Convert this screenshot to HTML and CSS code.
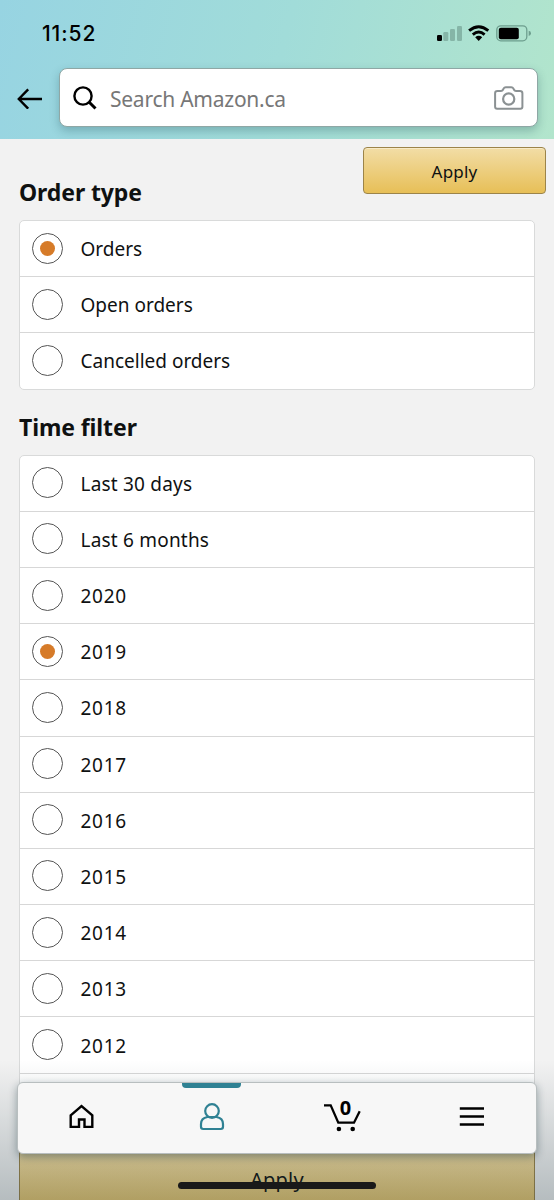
FILE: index.html
```
<!DOCTYPE html>
<html lang="en">
<head>
<meta charset="utf-8">
<title>Filter orders</title>
<link rel="stylesheet" href="styles.css">
</head>
<body>
<div class="screen">
  <header class="header">
    <div class="status">
      <span class="clock">11:52</span>
      <svg class="status-icons" width="96" height="18" viewBox="0 0 96 18">
        <rect x="1" y="11" width="5" height="6" rx="1.2"/>
        <g fill="#85b5a7"><rect x="7.3" y="8" width="5" height="9" rx="1.2"/><rect x="14" y="5" width="5" height="12" rx="1.2"/><rect x="21" y="2" width="5" height="15" rx="1.2"/></g>
        <g fill="none" stroke="#000" stroke-width="2.9"><path d="M33.1 6.7Q42.7 -1.3 52.3 6.7"/><path d="M36.8 10.6Q42.7 5.6 48.6 10.6"/></g>
        <path d="M39.2 13.2Q42.7 10.5 46.2 13.2L42.7 17Z"/>
        <rect x="60.8" y="1.8" width="30" height="15" rx="4" fill="none" stroke="#6d9e8e" stroke-width="1.3"/>
        <rect x="62.8" y="3.7" width="20" height="11.5" rx="2"/>
        <path d="M92.7 6.7Q95 7 95 9.3T92.7 11.9Z" fill="#6d9e8e"/>
      </svg>
    </div>
    <div class="search-row">
      <svg class="back" width="26" height="22" viewBox="0 0 26 22"><path d="M25 12H2M11.2 2.3L1.8 12L11.2 21.7" fill="none" stroke="#000" stroke-width="2.4"/></svg>
      <div class="search">
        <svg class="lens" width="24" height="24" viewBox="0 0 24 24" fill="none" stroke="#000"><circle cx="10" cy="10" r="8.6" stroke-width="2.4"/><path d="M16 16L22.5 22.5" stroke-width="3"/></svg>
        <span class="placeholder">Search Amazon.ca</span>
        <svg width="30" height="24" viewBox="0 0 30 24" fill="none" stroke="#8b9193" stroke-width="2"><path d="M3.5 5H7Q8.4 5 9 3.8L9.7 2.4Q10.3 1.2 11.7 1.2H17.3Q18.7 1.2 19.3 2.4L20 3.8Q20.6 5 22 5H25.8Q28.4 5 28.4 7.2V20.8Q28.4 22.8 26.4 22.8H3.1Q1.1 22.8 1.1 20.8V7.2Q1.1 5 3.5 5Z"/><circle cx="14.7" cy="13" r="5.6" stroke-width="2.2"/></svg>
      </div>
    </div>
  </header>
  <main class="content">
    <div class="top">
      <h2 class="heading">Order type</h2>
      <button class="apply">Apply</button>
    </div>
    <section class="card">
      <div class="option"><span class="radio checked"></span><span>Orders</span></div>
      <div class="option"><span class="radio"></span><span>Open orders</span></div>
      <div class="option"><span class="radio"></span><span>Cancelled orders</span></div>
    </section>
    <h2 class="heading time">Time filter</h2>
    <section class="card">
      <div class="option recent"><span class="radio"></span><span>Last 30 days</span></div>
      <div class="option recent"><span class="radio"></span><span>Last 6 months</span></div>
      <div class="option year"><span class="radio"></span><span>2020</span></div>
      <div class="option year"><span class="radio checked"></span><span>2019</span></div>
      <div class="option year"><span class="radio"></span><span>2018</span></div>
      <div class="option year"><span class="radio"></span><span>2017</span></div>
      <div class="option year"><span class="radio"></span><span>2016</span></div>
      <div class="option year"><span class="radio"></span><span>2015</span></div>
      <div class="option year"><span class="radio"></span><span>2014</span></div>
      <div class="option year"><span class="radio"></span><span>2013</span></div>
      <div class="option year"><span class="radio"></span><span>2012</span></div>
      <div class="option"></div>
    </section>
    <button class="apply wide">Apply</button>
  </main>
  <div class="shade"></div>
  <nav class="nav">
    <a class="tab"><svg width="28" height="28" viewBox="0 0 28 28"><path d="M1.7 11.3L12.5 2L23.3 11.3V22.9H15.5V15.5H10V22.9H1.7Z" fill="none" stroke="#000" stroke-width="2.4"/></svg></a>
    <a class="tab active"><svg width="26" height="30" viewBox="0 0 26 30" fill="none" stroke="#2f8193" stroke-width="2.2"><circle cx="13" cy="8" r="6.8"/><path d="M8.5 14H17.5Q24 15 24 21V23.8Q24 26 21.8 26H4.2Q2 26 2 23.8V21Q2 15 8.5 14Z"/></svg></a>
    <a class="tab"><span class="cart"><svg width="38" height="32" viewBox="0 0 38 32"><path d="M1 3.4H7.7L15.3 20.7H31L36.7 9.3" fill="none" stroke="#000" stroke-width="2.3"/><circle cx="15.9" cy="27" r="2.3"/><circle cx="29.7" cy="27" r="2.3"/></svg><span class="count">0</span></span></a>
    <a class="tab"><svg width="26" height="22" viewBox="0 0 26 22"><path d="M1.8 1.5H26M1.8 9.5H26M1.8 17.5H26" stroke="#000" stroke-width="2.5"/></svg></a>
  </nav>
  <div class="home-bar"></div>
</div>
</body>
</html>
```
FILE: styles.css
```
* { box-sizing: border-box; }
body { margin: 0; }
.screen {
  position: relative;
  width: 554px;
  height: 1200px;
  overflow: hidden;
  background: #f2f2f2;
  color: #0f1111;
  font-family: "Noto Sans", "Open Sans", sans-serif;
}
.header {
  height: 139px;
  background: linear-gradient(104deg, #97d4e2 0%, #a1dcd9 50%, #b2e5cc 100%);
  overflow: hidden;
}
.status {
  display: flex;
  justify-content: space-between;
  height: 68px;
  padding: 22px 22px 0 42px;
}
.clock {
  color: #000;
  font: 500 21px/24px Inter, sans-serif;
  letter-spacing: 0.9px;
}
.status-icons { margin-top: 2px; }
.search-row { display: flex; align-items: center; padding: 0 16px 0 17px; }
.back { margin-right: 16px; }
.search {
  display: flex;
  flex: 1;
  align-items: center;
  height: 59px;
  padding: 0 13px;
  border: 1px solid #8fa7a5;
  border-radius: 8px;
  background: #fff;
  box-shadow: 0 4px 10px rgba(20, 70, 80, .28);
}
.lens { margin-top: 1px; }
.placeholder {
  flex: 1;
  margin-left: 13px;
  padding-top: 2px;
  color: #777;
  font-size: 21px;
  letter-spacing: -0.25px;
}
.content { padding: 0 19px; }
.top { display: flex; justify-content: space-between; height: 81px; padding-top: 8px; }
.heading { margin: 0; font-size: 23px; font-weight: 700; line-height: 32px; letter-spacing: -0.1px; }
.top .heading { margin-top: 29px; }
.heading.time { height: 65px; padding-top: 21px; }
.apply {
  width: 183px;
  height: 47px;
  margin-right: -11px;
  padding: 2px 0 0;
  border: 1px solid #9c8449;
  border-radius: 4px;
  background: linear-gradient(#f2dda6, #e7bf57);
  box-shadow: inset 0 1px 0 #f8ebc7;
  color: #0f1111;
  font: 17px "Noto Sans", sans-serif;
  letter-spacing: 0.2px;
}
.card { border: 1px solid #d9dada; border-radius: 5px; background: #fff; }
.option {
  display: flex;
  align-items: center;
  gap: 17.5px;
  height: 56.2px;
  padding: 1px 12px 0;
  border-bottom: 1px solid #d7d7d7;
  font-size: 19px;
  line-height: 26px;
}
.option:last-child { height: 55.2px; border-bottom: 0; }
.recent { letter-spacing: 0.2px; }
.year { letter-spacing: 0.75px; }
.radio {
  display: flex;
  align-items: center;
  justify-content: center;
  flex: none;
  width: 31px;
  height: 31px;
  margin-top: -2px;
  border: 1px solid #555;
  border-radius: 50%;
  background: #fff;
}
.checked::after { content: ""; width: 15px; height: 15px; border-radius: 50%; background: #d67b29; }
.apply.wide {
  width: 516px;
  height: 80px;
  margin: 18px 0 0;
  padding-bottom: 18px;
  font-size: 20px;
}
.shade {
  position: absolute;
  inset: 1060px 0 0;
  background: linear-gradient(rgba(25, 50, 55, 0), rgba(25, 50, 60, .28));
}
.nav {
  position: absolute;
  left: 17px;
  top: 1082px;
  display: flex;
  width: 520px;
  height: 72px;
  border: 1px solid #b8bebf;
  border-radius: 6px;
  background: #f7f7f7;
  box-shadow: 0 3px 8px rgba(20, 50, 60, .4);
}
.tab { position: relative; display: flex; flex: 1; align-items: center; justify-content: center; }
.active::before {
  content: "";
  position: absolute;
  top: 0;
  left: 34.5px;
  width: 59px;
  height: 5px;
  border-radius: 0 0 4px 4px;
  background: #2f8193;
}
.cart { position: relative; display: flex; }
.count { position: absolute; left: 17px; top: -4px; color: #000; font-size: 20px; font-weight: 700; line-height: 20px; }
.home-bar {
  position: absolute;
  left: 178px;
  top: 1182px;
  width: 198px;
  height: 7px;
  border-radius: 4px;
  background: #191919;
}
```
